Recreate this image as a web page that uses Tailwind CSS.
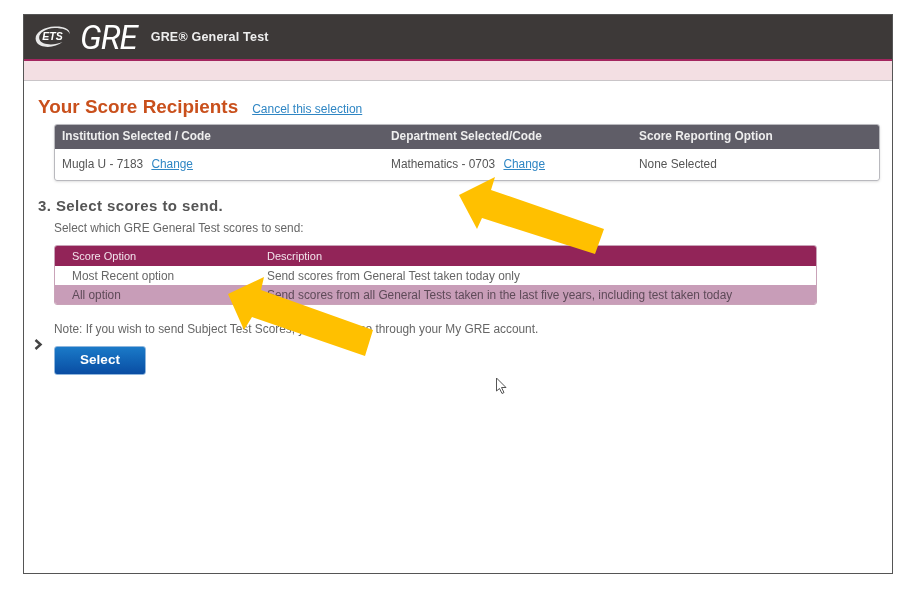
<!DOCTYPE html>
<html lang="en">
  <head>
    <meta charset="UTF-8" />
    <meta name="viewport" content="width=device-width, initial-scale=1.0" />
    <title>GRE General Test</title>
    <script src="https://cdn.jsdelivr.net/npm/@tailwindcss/browser@4"></script>
  </head>
  <body class="bg-white h-[593px] w-[919px] overflow-hidden relative font-['Liberation_Sans',Arial,sans-serif]">
    <!-- Screenshot frame -->
    <div class="ml-[23px] mt-[14px] w-[870px] h-[560px] border border-[#555] bg-white flex flex-col blur-[0.5px]">
      <!-- Header -->
      <header class="h-[44px] bg-[#3d3938] flex items-center pl-[9px] text-white shrink-0">
        <div class="relative w-[39px] h-[24px] flex items-center justify-center">
          <svg class="absolute inset-0 w-[39px] h-[24px]" viewBox="0 0 38 24">
            <path d="M3 17 C-1 9 9 2 21 1.5 C30 1 37 4 36 9 C35.5 5 29 3 21 3 C11 3.5 4 9 6 14.5 C8 20 20 21 29 17 C22 23 7 24 3 17 Z" fill="#e8e8e8" />
          </svg>
          <span class="relative italic text-[10.5px] font-bold leading-none -mt-[1px]">ETS</span>
        </div>
        <span class="ml-[8px] italic text-[33px] leading-none font-['Roboto',sans-serif] tracking-[-1px]">GRE</span>
        <span class="ml-[14px] text-[12.5px] font-bold text-[#eee] tracking-[0.2px]">GRE® General Test</span>
      </header>
      <div class="h-[22px] bg-[#f3dfe3] border-t-2 border-[#a3265f] border-b border-b-[#c9c5c8] shrink-0"></div>

      <main class="flex-1 relative">
        <div class="flex items-baseline pl-[14px] pt-[15px]">
          <h1 class="text-[18.9px] leading-[22px] font-bold text-[#c9501c]">Your Score Recipients</h1>
          <a href="#" class="ml-[14px] text-[12px] text-[#2f86c4] underline">Cancel this selection</a>
        </div>

        <!-- Recipient table -->
        <div class="ml-[30px] mt-[6px] w-[826px] h-[57px] rounded-[3px] border border-[#b9b9be] shadow-sm text-[11.87px]">
          <div class="grid grid-cols-[329px_248px_1fr] pl-[7px] h-[24px] items-center bg-[#5f5d67] text-[#eee] font-bold rounded-t-[2px]">
            <span>Institution Selected / Code</span>
            <span>Department Selected/Code</span>
            <span>Score Reporting Option</span>
          </div>
          <div class="grid grid-cols-[329px_248px_1fr] pl-[7px] h-[31px] items-center text-[#555]">
            <span>Mugla U - 7183 <a href="#" class="ml-[5px] text-[#2f86c4] underline">Change</a></span>
            <span>Mathematics - 0703 <a href="#" class="ml-[5px] text-[#2f86c4] underline">Change</a></span>
            <span>None Selected</span>
          </div>
        </div>

        <h2 class="ml-[14px] mt-[16px] text-[15px] leading-[18px] font-bold text-[#555] tracking-[0.4px]">3. Select scores to send.</h2>
        <p class="ml-[30px] mt-[6px] text-[11.87px] leading-[14px] text-[#666]">Select which GRE General Test scores to send:</p>

        <!-- Score option table -->
        <div class="ml-[30px] mt-[10px] w-[763px] rounded-[3px] border border-[#c9a3b8] overflow-hidden text-[11.87px]">
          <div class="grid grid-cols-[195px_1fr] pl-[17px] h-[20px] items-center bg-[#922458] text-[#f2e4ec] text-[11px]">
            <span>Score Option</span>
            <span>Description</span>
          </div>
          <div class="grid grid-cols-[195px_1fr] pl-[17px] pt-[2px] h-[19px] items-center bg-white text-[#666]">
            <span>Most Recent option</span>
            <span>Send scores from General Test taken today only</span>
          </div>
          <div class="grid grid-cols-[195px_1fr] pl-[17px] pt-[2px] h-[19px] items-center bg-[#c89db8] text-[#5e4a58]">
            <span>All option</span>
            <span>Send scores from all General Tests taken in the last five years, including test taken today</span>
          </div>
        </div>

        <p class="ml-[30px] mt-[17px] text-[11.87px] leading-[14px] text-[#666]">Note: If you wish to send Subject Test Scores, you can do so through your My GRE account.</p>

        <div class="flex items-start mt-[10px] ml-[10px]">
          <svg class="w-[9px] h-[11px] -mt-[7px]" viewBox="0 0 9 11"><path d="M1.5 1 L6.5 5.5 L1.5 10" fill="none" stroke="#444" stroke-width="2.5" /></svg>
          <button class="ml-[11px] w-[92px] h-[29px] rounded-[3px] bg-gradient-to-b from-[#1b7ac8] to-[#0a4da3] border border-[#8fb6dd] text-white text-[13.5px] font-bold">Select</button>
        </div>
      </main>
    </div>

    <!-- Annotation arrows and cursor, drawn over the screenshot -->
    <svg class="absolute left-0 top-0 w-[919px] h-[593px] pointer-events-none" viewBox="0 0 919 593">
      <polygon fill="#ffc000" points="495,177 459,195 477,229 482,218 595,254 604,229 491,190" />
      <polygon fill="#ffc000" points="264,277 228,294 244,330 252,317 365,356 373,330 261,290" />
      <path d="M496.5 378 L496.5 391 L499.5 388.5 L502 393.5 L504 392.5 L501.5 387.5 L506 387.5 Z" fill="#fff" stroke="#555" stroke-width="1" />
    </svg>
  </body>
</html>
